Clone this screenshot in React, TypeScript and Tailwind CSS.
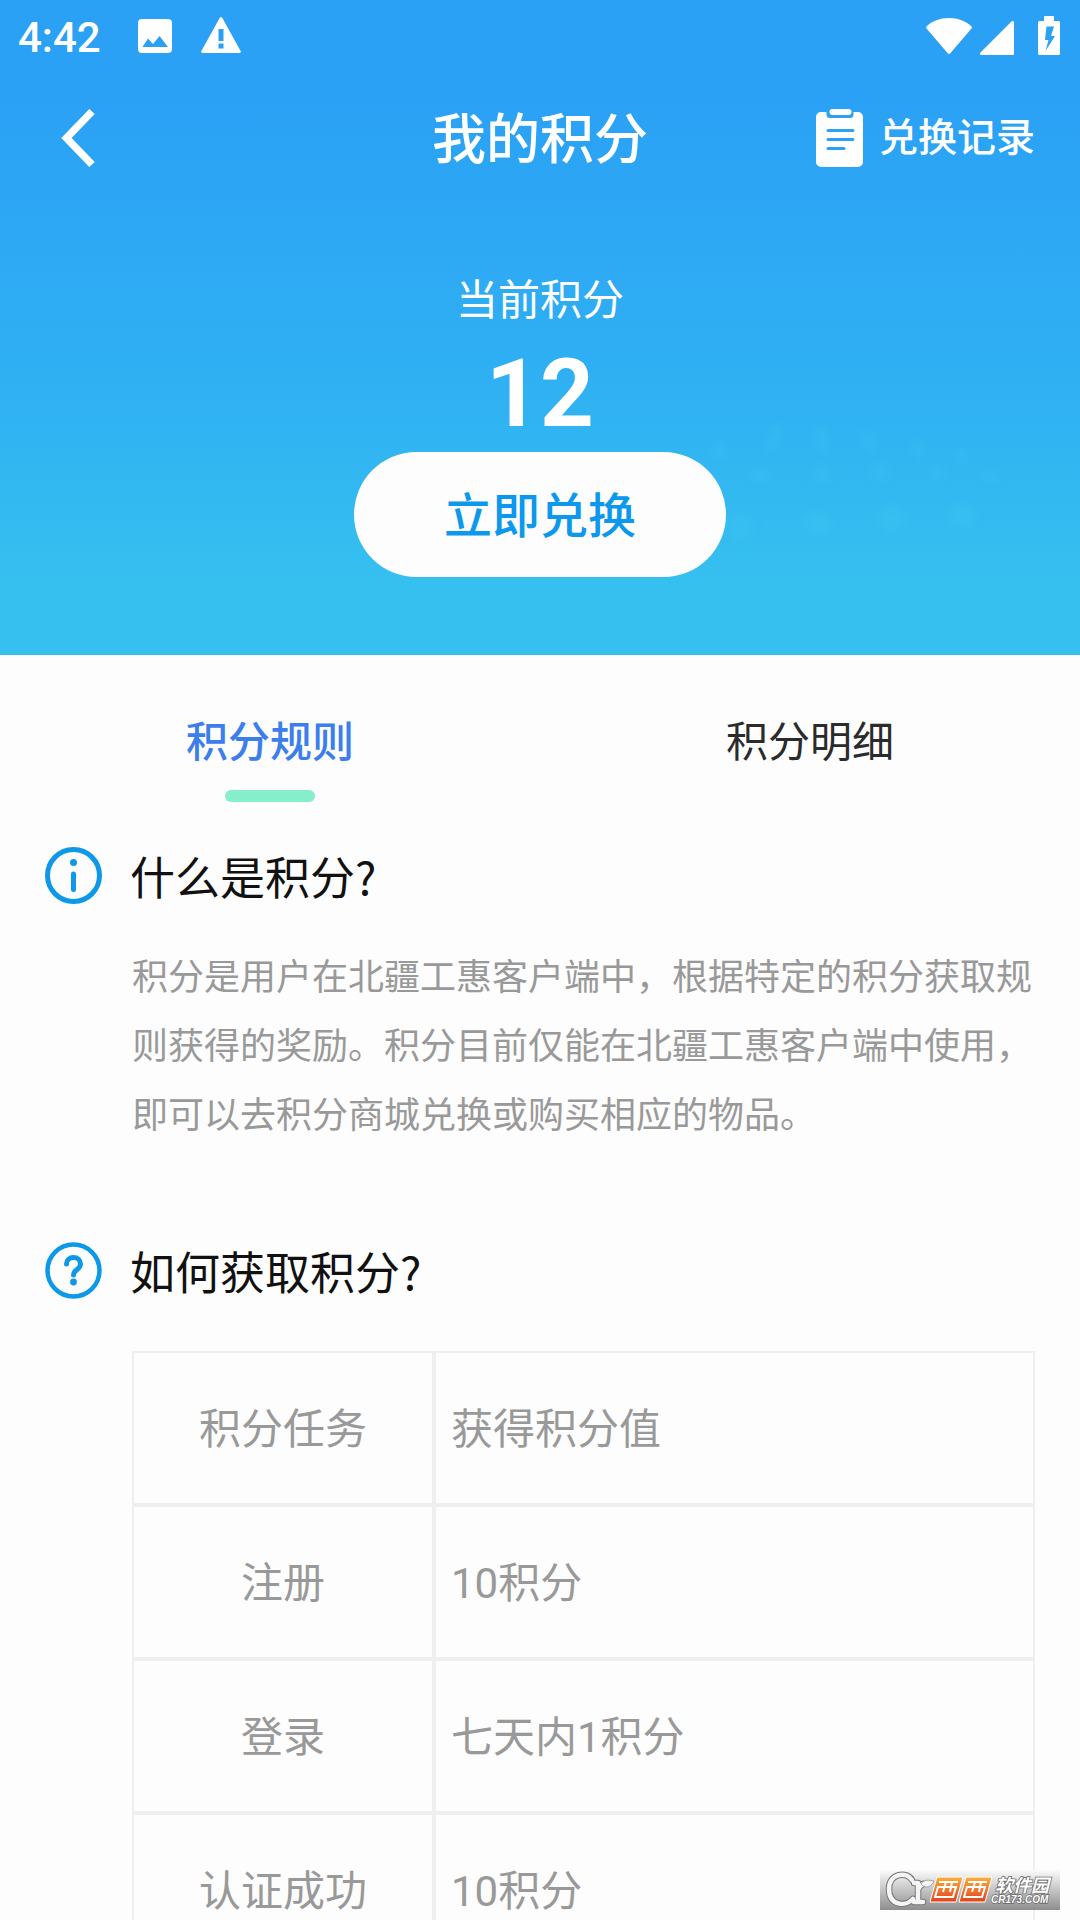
import { useState } from "react";

const tabs = ["积分规则", "积分明细"];

const tasks = [
  { name: "注册", points: "10积分" },
  { name: "登录", points: "七天内1积分" },
  { name: "认证成功", points: "10积分" },
];

// Soft light spots behind the redeem button: [cx, cy, rx, ry, rotation]
const spots = [
  [20, 40, 8, 8, 0],
  [74, 28, 5, 15, 25],
  [122, 30, 6, 14, -10],
  [168, 30, 5, 14, -25],
  [218, 38, 5, 10, -10],
  [262, 46, 6, 7, 0],
  [60, 66, 10, 8, 0],
  [122, 64, 11, 8, 0],
  [181, 62, 11, 8, 0],
  [237, 63, 9, 7, 0],
  [291, 67, 9, 6, 30],
  [40, 117, 14, 12, 0],
  [118, 114, 14, 12, 0],
  [191, 108, 14, 12, 0],
  [262, 106, 14, 12, 0],
];

function StatusBar() {
  return (
    <div className="flex h-[72px] items-center justify-between pr-5 pl-[18px]">
      <div className="flex items-center">
        <span className="w-[120px] pt-[3px] text-[42px] leading-none font-medium">4:42</span>
        <svg className="h-[34px] w-[34px]" viewBox="0 0 34 34" fill="currentColor" aria-hidden="true">
          <path
            fillRule="evenodd"
            d="M4 0h26a4 4 0 0 1 4 4v26a4 4 0 0 1-4 4H4a4 4 0 0 1-4-4V4a4 4 0 0 1 4-4zM4.500 28h25.500l-8.500-11-6.500 8-5-5.500z"
          />
        </svg>
        <svg className="mb-[2px] ml-[29px] h-9 w-10" viewBox="0 0 40 36" fill="currentColor" aria-hidden="true">
          <path
            fillRule="evenodd"
            d="M18.800.8a1.500 1.500 0 0 1 2.400 0L39.600 34a1.300 1.300 0 0 1-1.200 2H1.600a1.300 1.300 0 0 1-1.200-2zM17.500 12v12h5V12zm0 14.500v5h5v-5z"
          />
        </svg>
      </div>
      <div className="flex items-end pb-[2px]">
        <svg className="mb-[1px] h-9 w-[46px]" viewBox="0 0 46 36" fill="currentColor" aria-hidden="true">
          <path d="M.5 8.500C6 3 14 0 23 0s17 3 22.500 8.500c.6.600.5 1.300 0 2L24.500 35c-1 1.200-2 1.200-3 0L.5 10.500c-.5-.7-.6-1.400 0-2z" />
        </svg>
        <svg className="ml-2 h-[34px] w-[34px]" viewBox="0 0 34 34" fill="currentColor" aria-hidden="true">
          <path d="M34 1.500V32.500c0 1-.5 1.500-1.500 1.500H1.500C0 34-.5 32.500.5 31.500L31.500.5C32.500-.5 34 0 34 1.500z" />
        </svg>
        <svg className="ml-6 h-[39px] w-[22px]" viewBox="0 0 22 39" fill="currentColor" aria-hidden="true">
          <path
            fillRule="evenodd"
            d="M6 1a1 1 0 0 1 1-1h8a1 1 0 0 1 1 1v4h4.500A1.500 1.500 0 0 1 22 6.500v31a1.500 1.500 0 0 1-1.500 1.500h-19A1.500 1.500 0 0 1 0 37.500v-31A1.500 1.500 0 0 1 1.500 5H6zM8.500 10.500L7 24h3.500L7.500 35l9.500-15h-4L16 10.500z"
          />
        </svg>
      </div>
    </div>
  );
}

function ClipboardIcon() {
  return (
    <svg className="h-[58px] w-[47px]" viewBox="0 0 47 58" aria-hidden="true">
      <path
        fill="currentColor"
        d="M5 3h5.500v2.500A3.500 3.500 0 0 0 14 9h20a3.500 3.500 0 0 0 3.500-3.500V3H42a5 5 0 0 1 5 5v45a5 5 0 0 1-5 5H5a5 5 0 0 1-5-5V8a5 5 0 0 1 5-5z"
      />
      <rect x="13.500" y="0" width="22" height="6" rx="3" fill="currentColor" />
      <path d="M12 21.500h25M12 30.500h25M12 39.500h16" stroke="#2ba2f5" strokeWidth="3" strokeLinecap="round" />
    </svg>
  );
}

function InfoIcon() {
  return (
    <svg className="size-[57px] shrink-0" viewBox="0 0 57 57" fill="none" stroke="#0d98e8" aria-hidden="true">
      <circle cx="28.500" cy="28.500" r="26" strokeWidth="5" />
      <circle cx="28.500" cy="15.500" r="3.500" fill="#0d98e8" stroke="none" />
      <path d="M28.500 27v15.500" strokeWidth="5" strokeLinecap="round" />
    </svg>
  );
}

function QuestionIcon() {
  return (
    <svg className="size-[57px] shrink-0" viewBox="0 0 57 57" fill="none" stroke="#0d98e8" aria-hidden="true">
      <circle cx="28.500" cy="28.500" r="26" strokeWidth="4.500" />
      <path
        d="M21.500 22c0-4 3-6.500 7-6.500s7 2.500 7 6.500c0 5.500-7 5.500-7 11"
        strokeWidth="5"
        strokeLinecap="round"
        strokeLinejoin="round"
      />
      <circle cx="28.500" cy="40" r="3.400" fill="#0d98e8" stroke="none" />
    </svg>
  );
}

function Watermark() {
  return (
    <svg className="absolute right-5 bottom-[10px] h-10 w-[180px]" viewBox="0 0 180 40" aria-label="西西软件园 CR173.COM">
      <defs>
        <linearGradient id="plate" x1="0" y1="0" x2="0" y2="1">
          <stop offset="0" stopColor="#fbfbfb" />
          <stop offset="1" stopColor="#8e8e8e" />
        </linearGradient>
        <linearGradient id="orange" x1="0" y1="0" x2="0" y2="1">
          <stop offset="0" stopColor="#fbb03b" />
          <stop offset="1" stopColor="#e5401c" />
        </linearGradient>
      </defs>
      <rect width="180" height="40" fill="url(#plate)" />
      {/* Monogram with a leaf */}
      <g fill="none" strokeLinecap="round">
        <path d="M32 10C27 1 9 3 9 19c0 17 17 18 24 10M38 13v18M34 13h4M34 32h9M38 20c1-4 3-5 5-6" stroke="#777" strokeWidth="6.500" />
        <path d="M32 10C27 1 9 3 9 19c0 17 17 18 24 10M38 13v18M34 13h4M34 32h9M38 20c1-4 3-5 5-6" stroke="#f4f4f4" strokeWidth="4.500" />
      </g>
      <path d="M41 14c3-5 8-4 13-3-2 5-8 9-13 3z" fill="#f4f4f4" stroke="#888" strokeWidth="0.700" />
      <path d="M57 7h26l-7 25H50zM86 7h26l-7 25H79z" fill="url(#orange)" stroke="#fff" strokeWidth="1" />
      <g fill="none" stroke="#fff" strokeWidth="2">
        <path d="M59 12h19M58 17h18l-3 10H55zM66 12l-3 10M72 12l-2 10" />
        <path d="M88 12h19M87 17h18l-3 10H84zM95 12l-3 10M101 12l-2 10" />
      </g>
      <g fill="#fff" stroke="#666" strokeWidth="1.500" paintOrder="stroke" fontStyle="italic">
        <text x="115" y="22" fontSize="18" fontWeight="700" fontFamily="Noto Sans CJK SC, sans-serif">
          软件园
        </text>
        <text x="111" y="33" fontSize="10" fontWeight="700" fontFamily="Liberation Sans, sans-serif">
          CR173.COM
        </text>
      </g>
    </svg>
  );
}

export default function App() {
  const [activeTab, setActiveTab] = useState(0);

  return (
    <div className="relative flex h-screen flex-col overflow-hidden bg-[#fdfdfd] font-['Roboto','Noto_Sans_CJK_SC',sans-serif]">
      <header className="relative shrink-0 bg-linear-to-b from-[#2ba1f5] from-15% via-[#30b1f3] via-60% to-[#36c0ef] to-90% pb-[78px] text-white">
        <svg
          className="absolute top-[410px] right-0 h-[150px] w-[380px] blur-xs"
          viewBox="0 0 380 150"
          fill="#3fcdf2"
          fillOpacity="0.250"
          aria-hidden="true"
        >
          {spots.map(([cx, cy, rx, ry, angle]) => (
            <ellipse key={`${cx}-${cy}`} cx={cx} cy={cy} rx={rx} ry={ry} transform={`rotate(${angle} ${cx} ${cy})`} />
          ))}
        </svg>

        <StatusBar />

        {/* Title bar */}
        <div className="grid h-[132px] grid-cols-[1fr_auto_1fr] items-center px-[45px]">
          <button type="button" aria-label="返回" className="justify-self-start pl-[15px]">
            <svg className="h-[60px] w-9" viewBox="0 0 36 60" fill="none" aria-hidden="true">
              <path d="M32 3.500L6.500 30L32 56.500" stroke="currentColor" strokeWidth="7.500" />
            </svg>
          </button>
          <h1 className="pt-[6px] text-[54px] leading-none font-medium">我的积分</h1>
          <button type="button" className="flex items-center gap-4 justify-self-end text-[39px] leading-none font-medium">
            <ClipboardIcon />
            兑换记录
          </button>
        </div>

        {/* Balance */}
        <div className="flex flex-col items-center pt-[67px]">
          <p className="text-[42px] leading-[60px]">当前积分</p>
          <p className="pt-[7px] pb-[2px] text-[94px] leading-[112px] font-bold">12</p>
          <button
            type="button"
            className="relative h-[125px] w-[372px] rounded-full bg-[#fdfdfd] pt-[5px] text-5xl font-medium text-[#0c98ec]"
          >
            立即兑换
          </button>
        </div>
      </header>

      <div role="tablist" className="grid shrink-0 grid-cols-2 pt-[58px]">
        {tabs.map((tab, index) => (
          <button
            key={tab}
            type="button"
            role="tab"
            aria-selected={index === activeTab}
            onClick={() => setActiveTab(index)}
            className={`flex flex-col items-center gap-[17px] text-[42px] leading-[60px] ${
              index === activeTab ? "font-medium text-[#3c7eeb]" : "text-[#2b2b2b]"
            }`}
          >
            {tab}
            {index === activeTab && <span className="h-3 w-[90px] rounded-full bg-[#84efca]" />}
          </button>
        ))}
      </div>

      <main className="min-h-0 flex-1 overflow-y-auto px-[45px] pt-[45px] [scrollbar-width:none]">
        <section className="font-['Noto_Sans_CJK_SC',sans-serif]">
          <div className="flex items-center gap-7">
            <InfoIcon />
            <h2 className="text-[45px] leading-[57px] text-[#111]">什么是积分?</h2>
          </div>
          <p className="pt-9 pl-[87px] text-4xl leading-[69px] text-[#999]">
            积分是用户在北疆工惠客户端中，根据特定的积分获取规则获得的奖励。积分目前仅能在北疆工惠客户端中使用，即可以去积分商城兑换或购买相应的物品。
          </p>
        </section>

        <section className="pt-[95px]">
          <div className="flex items-center gap-7">
            <QuestionIcon />
            <h2 className="font-['Noto_Sans_CJK_SC',sans-serif] text-[45px] leading-[57px] text-[#111]">如何获取积分?</h2>
          </div>
          <div className="pt-[52px] pl-[87px]">
            <table className="w-full table-fixed border-separate border-spacing-0 text-[42px] leading-[60px] text-[#999]">
              <thead>
                <tr>
                  <th className="h-[154px] w-[302px] border-2 border-[#efefef] pt-1 font-normal">积分任务</th>
                  <th className="h-[154px] border-2 border-[#efefef] px-[15px] pt-1 text-left font-normal">获得积分值</th>
                </tr>
              </thead>
              <tbody>
                {tasks.map((task) => (
                  <tr key={task.name}>
                    <td className="h-[154px] border-2 border-[#efefef] pt-1 text-center">{task.name}</td>
                    <td className="h-[154px] border-2 border-[#efefef] px-[15px] pt-1">{task.points}</td>
                  </tr>
                ))}
              </tbody>
            </table>
          </div>
        </section>
      </main>

      <Watermark />
    </div>
  );
}
